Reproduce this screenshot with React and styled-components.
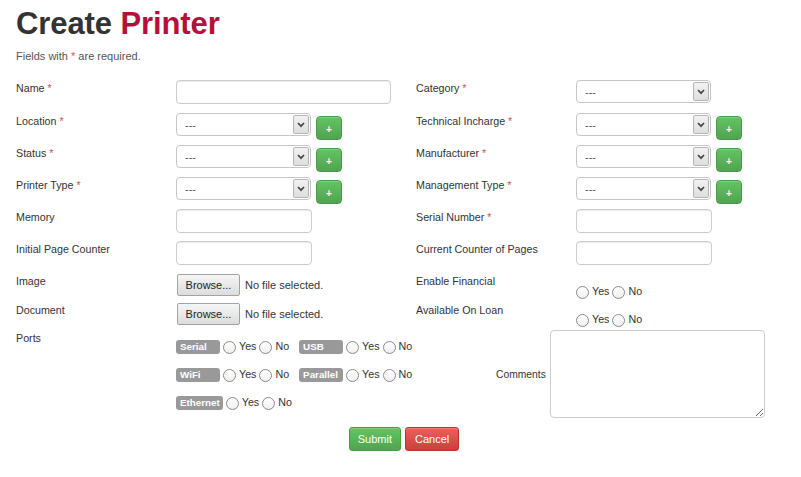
import React from "react";
import styled, { createGlobalStyle } from "styled-components";

const Global = createGlobalStyle`
  html, body { margin: 0; padding: 0; background: #fff; overflow: hidden; }
  body { font-family: "Liberation Sans", Arial, sans-serif; color: #333; }
  * { box-sizing: border-box; }
`;

const Page = styled.div`
  width: 801px;
  padding: 6px 9px 0 16px;
`;

const Title = styled.h1`
  margin: 0;
  font-size: 31px;
  line-height: 36px;
  font-weight: bold;
  color: #333;
  letter-spacing: -0.1px;
`;

const Accent = styled.span`
  color: #b50f3c;
`;

const Note = styled.p`
  margin: 7px 0 16px;
  font-size: 11px;
  line-height: 15px;
  color: #555;
`;

const Req = styled.span`
  color: #d9534f;
`;

const FormGrid = styled.div`
  display: grid;
  grid-template-columns: 400px 1fr;
  grid-template-rows: 33px 32px 32px 32px 32px 33px 29px 27px;
`;

const Field = styled.div`
  display: flex;
  align-items: flex-start;
`;

const Label = styled.label`
  width: 160px;
  flex: none;
  font-size: 10.7px;
  line-height: 16px;
  margin-top: ${(p) => p.$pt ?? 0}px;
  color: #333;
`;

const TextInput = styled.input`
  width: ${(p) => p.$w}px;
  height: 24px;
  border: 1px solid #ccc;
  border-radius: 4px;
  box-shadow: inset 0 1px 1px rgba(0, 0, 0, 0.075);
  padding: 0 6px;
  font: 11px "Liberation Sans", Arial, sans-serif;
  outline: none;
`;

const SelectBox = styled.div`
  width: 135px;
  height: 23px;
  display: flex;
  border: 1px solid #c6c6c6;
  border-radius: 4px;
  background: #fff;
  overflow: hidden;
`;

const NativeSelect = styled.select`
  flex: 1;
  min-width: 0;
  appearance: none;
  -webkit-appearance: none;
  border: none;
  background: transparent;
  padding: 0 0 0 8px;
  font: 11px "Liberation Sans", Arial, sans-serif;
  color: #555;
  outline: none;
`;

const ArrowBox = styled.span`
  width: 16px;
  margin: 1px 1px 1px 0;
  display: flex;
  align-items: center;
  justify-content: center;
  border: 1px solid #b5b5b5;
  border-radius: 2px;
  background: linear-gradient(#f2f2f2, #dedede);
`;

const PlusButton = styled.button`
  width: 26px;
  height: 24px;
  margin: 3px 0 0 5px;
  border: 1px solid #4a9a4a;
  border-radius: 4px;
  background: linear-gradient(#62c462, #51a351);
  color: #fff;
  font: bold 10px "Liberation Sans", Arial, sans-serif;
  padding: 2px 0 0;
  box-shadow: inset 0 1px 0 rgba(255, 255, 255, 0.2);
`;

const FileRow = styled.div`
  display: flex;
  align-items: center;
  gap: 5px;
  padding-left: 1px;
`;

const BrowseButton = styled.button`
  width: 63px;
  height: 22px;
  border: 1px solid #a3a3a3;
  border-radius: 2px;
  background: linear-gradient(#f6f6f6, #dcdcdc);
  font: 11px "Liberation Sans", Arial, sans-serif;
  color: #222;
  padding: 0;
`;

const FileText = styled.span`
  font-size: 11px;
  color: #333;
`;

const RadioGroup = styled.div`
  display: flex;
  align-items: flex-start;
  padding-top: ${(p) => p.$pt ?? 0}px;
`;

const Radio = styled.input.attrs({ type: "radio" })`
  appearance: none;
  -webkit-appearance: none;
  width: 13px;
  height: 13px;
  margin: 0;
  border: 1px solid #8a8a8a;
  border-radius: 50%;
  background: linear-gradient(#fff, #f0f0f0);
  flex: none;
`;

const OptText = styled.span`
  font-size: 10.7px;
  line-height: 11px;
  color: #333;
  margin: 0 3px 0 3px;
`;

const Bottom = styled.div`
  display: flex;
  align-items: flex-start;
`;

const Ports = styled.div`
  width: 320px;
  flex: none;
  padding-top: 10px;
  display: flex;
  flex-wrap: wrap;
  row-gap: 14px;
  column-gap: 7px;
  align-content: flex-start;
`;

const PortGroup = styled.div`
  display: flex;
  align-items: flex-end;
`;

const Badge = styled.span`
  min-width: 44px;
  height: 14px;
  padding: 0 3px 0 4px;
  border-radius: 3px;
  background: #999;
  color: #fff;
  font: bold 9.8px/14px "Liberation Sans", Arial, sans-serif;
  margin-right: 3px;
`;

const Comments = styled.div`
  display: flex;
  align-items: center;
  gap: 4px;
`;

const CommentsLabel = styled.label`
  font-size: 10.3px;
  color: #333;
`;

const TextArea = styled.textarea`
  width: 215px;
  height: 88px;
  border: 1px solid #ccc;
  border-radius: 4px;
  resize: both;
  outline: none;
`;

const Actions = styled.div`
  display: flex;
  justify-content: center;
  gap: 4px;
  margin-top: 9px;
`;

const ActionButton = styled.button`
  height: 24px;
  padding: 0 ${(p) => p.$px}px;
  border-radius: 3px;
  font: 11px "Liberation Sans", Arial, sans-serif;
  color: #fff;
  border: 1px solid ${(p) => (p.$danger ? "#b5352e" : "#4a9a4a")};
  background: ${(p) =>
    p.$danger
      ? "linear-gradient(#ee5f5b, #c9403a)"
      : "linear-gradient(#62c462, #51a351)"};
  box-shadow: inset 0 1px 0 rgba(255, 255, 255, 0.2);
`;

const Chevron = () => (
  <svg width="8" height="6" viewBox="0 0 8 6">
    <path d="M1 1 L4 4.2 L7 1" fill="none" stroke="#4a4a4a" strokeWidth="1.8" />
  </svg>
);

const Select = () => (
  <SelectBox>
    <NativeSelect defaultValue="">
      <option value="">---</option>
    </NativeSelect>
    <ArrowBox>
      <Chevron />
    </ArrowBox>
  </SelectBox>
);

const L = ({ children, req, pt }) => (
  <Label $pt={pt}>
    {children}
    {req && <Req> *</Req>}
  </Label>
);

const YesNo = ({ name }) => (
  <>
    <Radio name={name} />
    <OptText>Yes</OptText>
    <Radio name={name} />
    <OptText>No</OptText>
  </>
);

const SelectField = ({ label, plus }) => (
  <Field>
    <L req>{label}</L>
    <Select />
    {plus && <PlusButton>+</PlusButton>}
  </Field>
);

export default function App() {
  return (
    <Page>
      <Global />
      <Title>
        Create <Accent>Printer</Accent>
      </Title>
      <Note>
        Fields with <Req>*</Req> are required.
      </Note>
      <FormGrid>
        <Field>
          <L req>Name</L>
          <TextInput $w={215} />
        </Field>
        <SelectField label="Category" />

        <SelectField label="Location" plus />
        <SelectField label="Technical Incharge" plus />

        <SelectField label="Status" plus />
        <SelectField label="Manufacturer" plus />

        <SelectField label="Printer Type" plus />
        <SelectField label="Management Type" plus />

        <Field>
          <L>Memory</L>
          <TextInput $w={136} />
        </Field>
        <Field>
          <L req>Serial Number</L>
          <TextInput $w={136} />
        </Field>

        <Field>
          <L>Initial Page Counter</L>
          <TextInput $w={136} />
        </Field>
        <Field>
          <L>Current Counter of Pages</L>
          <TextInput $w={136} />
        </Field>

        <Field>
          <L pt={-1}>Image</L>
          <FileRow>
            <BrowseButton>Browse...</BrowseButton>
            <FileText>No file selected.</FileText>
          </FileRow>
        </Field>
        <Field>
          <L pt={-1}>Enable Financial</L>
          <RadioGroup $pt={12}>
            <YesNo name="fin" />
          </RadioGroup>
        </Field>

        <Field>
          <L pt={-1}>Document</L>
          <FileRow>
            <BrowseButton>Browse...</BrowseButton>
            <FileText>No file selected.</FileText>
          </FileRow>
        </Field>
        <Field>
          <L pt={-1}>Available On Loan</L>
          <RadioGroup $pt={11}>
            <YesNo name="loan" />
          </RadioGroup>
        </Field>
      </FormGrid>

      <Bottom>
        <L>Ports</L>
        <Ports>
          {["Serial", "USB", "WiFi", "Parallel", "Ethernet"].map((p) => (
            <PortGroup key={p}>
              <Badge>{p}</Badge>
              <RadioGroup>
                <YesNo name={p} />
              </RadioGroup>
            </PortGroup>
          ))}
        </Ports>
        <Comments>
          <CommentsLabel>Comments</CommentsLabel>
          <TextArea />
        </Comments>
      </Bottom>

      <Actions>
        <ActionButton $px={8}>Submit</ActionButton>
        <ActionButton $px={9} $danger>
          Cancel
        </ActionButton>
      </Actions>
    </Page>
  );
}
